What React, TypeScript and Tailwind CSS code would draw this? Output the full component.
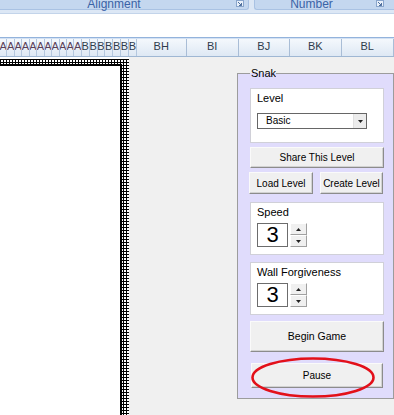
import React from "react";

function Launcher() {
  return (
    <svg width="8" height="7" viewBox="0 0 8 7" className="block">
      <rect x="0.5" y="0.5" width="7" height="6" fill="#e9f0fa" stroke="#8aa6cc" />
      <path d="M2 2 L5.5 5.5 M5.5 3 L5.5 5.5 L3 5.5" stroke="#4f6f9c" strokeWidth="1" fill="none" />
    </svg>
  );
}

function Tri({ up }: { up?: boolean }) {
  return (
    <svg width="5" height="3" viewBox="0 0 5 3" className="block">
      <path d={up ? "M0 3 L2.5 0 L5 3 Z" : "M0 0 L5 0 L2.5 3 Z"} fill="#222" />
    </svg>
  );
}

function Btn({ children, className = "" }: { children: React.ReactNode; className?: string }) {
  return (
    <div
      className={`flex items-center justify-center bg-[#f0f0f0] border border-t-[#fafafa] border-l-[#fafafa] border-r-[#8c8c8c] border-b-[#8c8c8c] shadow-[inset_-1px_-1px_0_#d2d2d2] text-black ${className}`}
    >
      {children}
    </div>
  );
}

function Spin() {
  return (
    <div className="flex items-center gap-[2px]">
      <div className="w-[31px] h-[24px] bg-white border border-[#6c6c6c] flex items-center justify-center text-[22px] leading-none text-black">
        3
      </div>
      <div className="flex flex-col w-[17px] h-[24px]">
        <div className="h-[12px] flex items-center justify-center bg-[#f0f0f0] border border-t-white border-l-white border-r-[#a0a0a0] border-b-[#a0a0a0]">
          <Tri up />
        </div>
        <div className="h-[12px] flex items-center justify-center bg-[#f0f0f0] border border-t-white border-l-white border-r-[#a0a0a0] border-b-[#a0a0a0]">
          <Tri />
        </div>
      </div>
    </div>
  );
}

export default function App() {
  const A = Array.from({ length: 11 });
  const B = Array.from({ length: 7 });
  const wide = [
    { t: "BH", w: "w-[50px]" },
    { t: "BI", w: "w-[52px]" },
    { t: "BJ", w: "w-[51px]" },
    { t: "BK", w: "w-[52px]" },
    { t: "BL", w: "w-[52px]" },
  ];
  return (
    <div className="w-[394px] h-[415px] overflow-hidden flex flex-col bg-[#f0f0f0] font-['Liberation_Sans',Arial,sans-serif]">
      {/* ribbon group labels */}
      <div className="h-[14px] shrink-0 flex bg-[#dce7f5] border-b border-[#c3d4ea] overflow-hidden">
        <div className="w-[249px] h-[10px] bg-[#c4d7ef] rounded-br-[3px] border-b border-r border-[#a9c2e3] relative flex justify-center pr-[20px]">
          <span className="text-[12px] leading-[12px] -mt-[2px] text-[#3a63a6] whitespace-nowrap">Alignment</span>
          <div className="absolute right-[4px] top-0">
            <Launcher />
          </div>
        </div>
        <div className="w-[5px] shrink-0" />
        <div className="flex-1 h-[10px] bg-[#c4d7ef] rounded-bl-[3px] border-b border-l border-[#a9c2e3] relative flex justify-center pr-[26px]">
          <span className="text-[12px] leading-[12px] -mt-[2px] text-[#3a63a6] whitespace-nowrap">Number</span>
          <div className="absolute right-[10px] top-0">
            <Launcher />
          </div>
        </div>
      </div>
      {/* formula area */}
      <div className="h-[23px] shrink-0 bg-white" />
      <div className="h-[2px] shrink-0 border-t border-[#93b3dc] bg-[#d3e1f3]" />
      {/* column headers */}
      <div className="h-[18px] shrink-0 flex bg-[linear-gradient(#f4f8fc,#dee8f4)] border-b border-[#9fb7d3] text-[11px] text-[#2f3b4c] overflow-hidden">
        {A.map((_, i) => (
          <div key={"a" + i} className="w-[7.45px] shrink-0 flex items-end justify-center pb-[2px] border-r border-[#b4c7de] overflow-hidden text-[#5a3f58]">
            A
          </div>
        ))}
        {B.map((_, i) => (
          <div key={"b" + i} className="w-[7.85px] shrink-0 flex items-end justify-center pb-[2px] border-r border-[#b4c7de] overflow-hidden">
            B
          </div>
        ))}
        {wide.map((c) => (
          <div key={c.t} className={`${c.w} shrink-0 flex items-end justify-center pb-[2px] border-r border-[#a9bdd6]`}>
            {c.t}
          </div>
        ))}
      </div>
      {/* body */}
      <div className="flex-1 flex min-h-0">
        {/* sheet with checkered border */}
        <div className="w-[129px] shrink-0 bg-white pt-[2px] flex flex-col">
          <div className="flex-1 flex flex-col pt-[5px] pr-[7px] bg-white bg-[linear-gradient(90deg,#000_0px,#000_1px,transparent_1px,transparent_3px),linear-gradient(#000_0px,#000_1px,transparent_1px,transparent_3px)] [background-size:3px_3px]">
            <div className="flex-1 bg-white border-t-2 border-r-2 border-black" />
          </div>
        </div>
        {/* gray area with form */}
        <div className="flex-1 pt-[16px] pl-[108px]">
          <div className="relative w-[157px] border border-[#9c9c9c] bg-[#e0dcfc] pt-[14px] pl-[12px] pr-[9px] pb-[10px] flex flex-col">
            <div className="absolute left-[12px] -top-[7px] h-[13px] w-[26px] overflow-hidden bg-[linear-gradient(#f0f0f0_50%,#e0dcfc_50%)] text-[11px] leading-[13px] text-black pl-[1px] whitespace-nowrap">
              Snake
            </div>
            {/* Level */}
            <div className="bg-white border border-[#d0d0d8] pt-[3px] pl-[6px] pb-[13px] flex flex-col">
              <div className="text-[11px] leading-[13px] text-black">Level</div>
              <div className="mt-[8px] w-[110px] h-[16px] border border-[#666] bg-white flex">
                <div className="flex-1 text-[10px] leading-[14px] pl-[8px] text-black">Basic</div>
                <div className="w-[13px] bg-[#ececec] border-l border-[#e0e0e0] flex items-center justify-center">
                  <Tri />
                </div>
              </div>
            </div>
            <Btn className="mt-[4px] h-[21px] text-[10px]">Share This Level</Btn>
            <div className="mt-[4px] flex justify-between -ml-[1px] pr-[1px]">
              <Btn className="w-[64px] h-[22px] text-[10px] whitespace-nowrap">Load Level</Btn>
              <Btn className="w-[63px] h-[22px] text-[10px] whitespace-nowrap">Create Level</Btn>
            </div>
            {/* Speed */}
            <div className="mt-[8px] bg-white border border-[#d0d0d8] pt-[3px] pl-[6px] pb-[7px] flex flex-col">
              <div className="text-[11px] leading-[13px] text-black">Speed</div>
              <div className="mt-[4px]">
                <Spin />
              </div>
            </div>
            {/* Wall */}
            <div className="mt-[7px] bg-white border border-[#d0d0d8] pt-[3px] pl-[6px] pb-[7px] flex flex-col">
              <div className="text-[11px] leading-[13px] text-black">Wall Forgiveness</div>
              <div className="mt-[4px]">
                <Spin />
              </div>
            </div>
            <Btn className="mt-[6px] h-[31px] text-[10.5px]">Begin Game</Btn>
            <div className="relative mt-[11px] px-[1px]">
              <Btn className="h-[25px] text-[10px]">Pause</Btn>
              <svg className="absolute left-[1px] -top-[6px]" width="125" height="41" viewBox="0 0 125 41">
                <ellipse cx="62" cy="20.5" rx="60.5" ry="19" fill="none" stroke="#e3101a" strokeWidth="2.6" />
              </svg>
            </div>
          </div>
        </div>
      </div>
    </div>
  );
}
